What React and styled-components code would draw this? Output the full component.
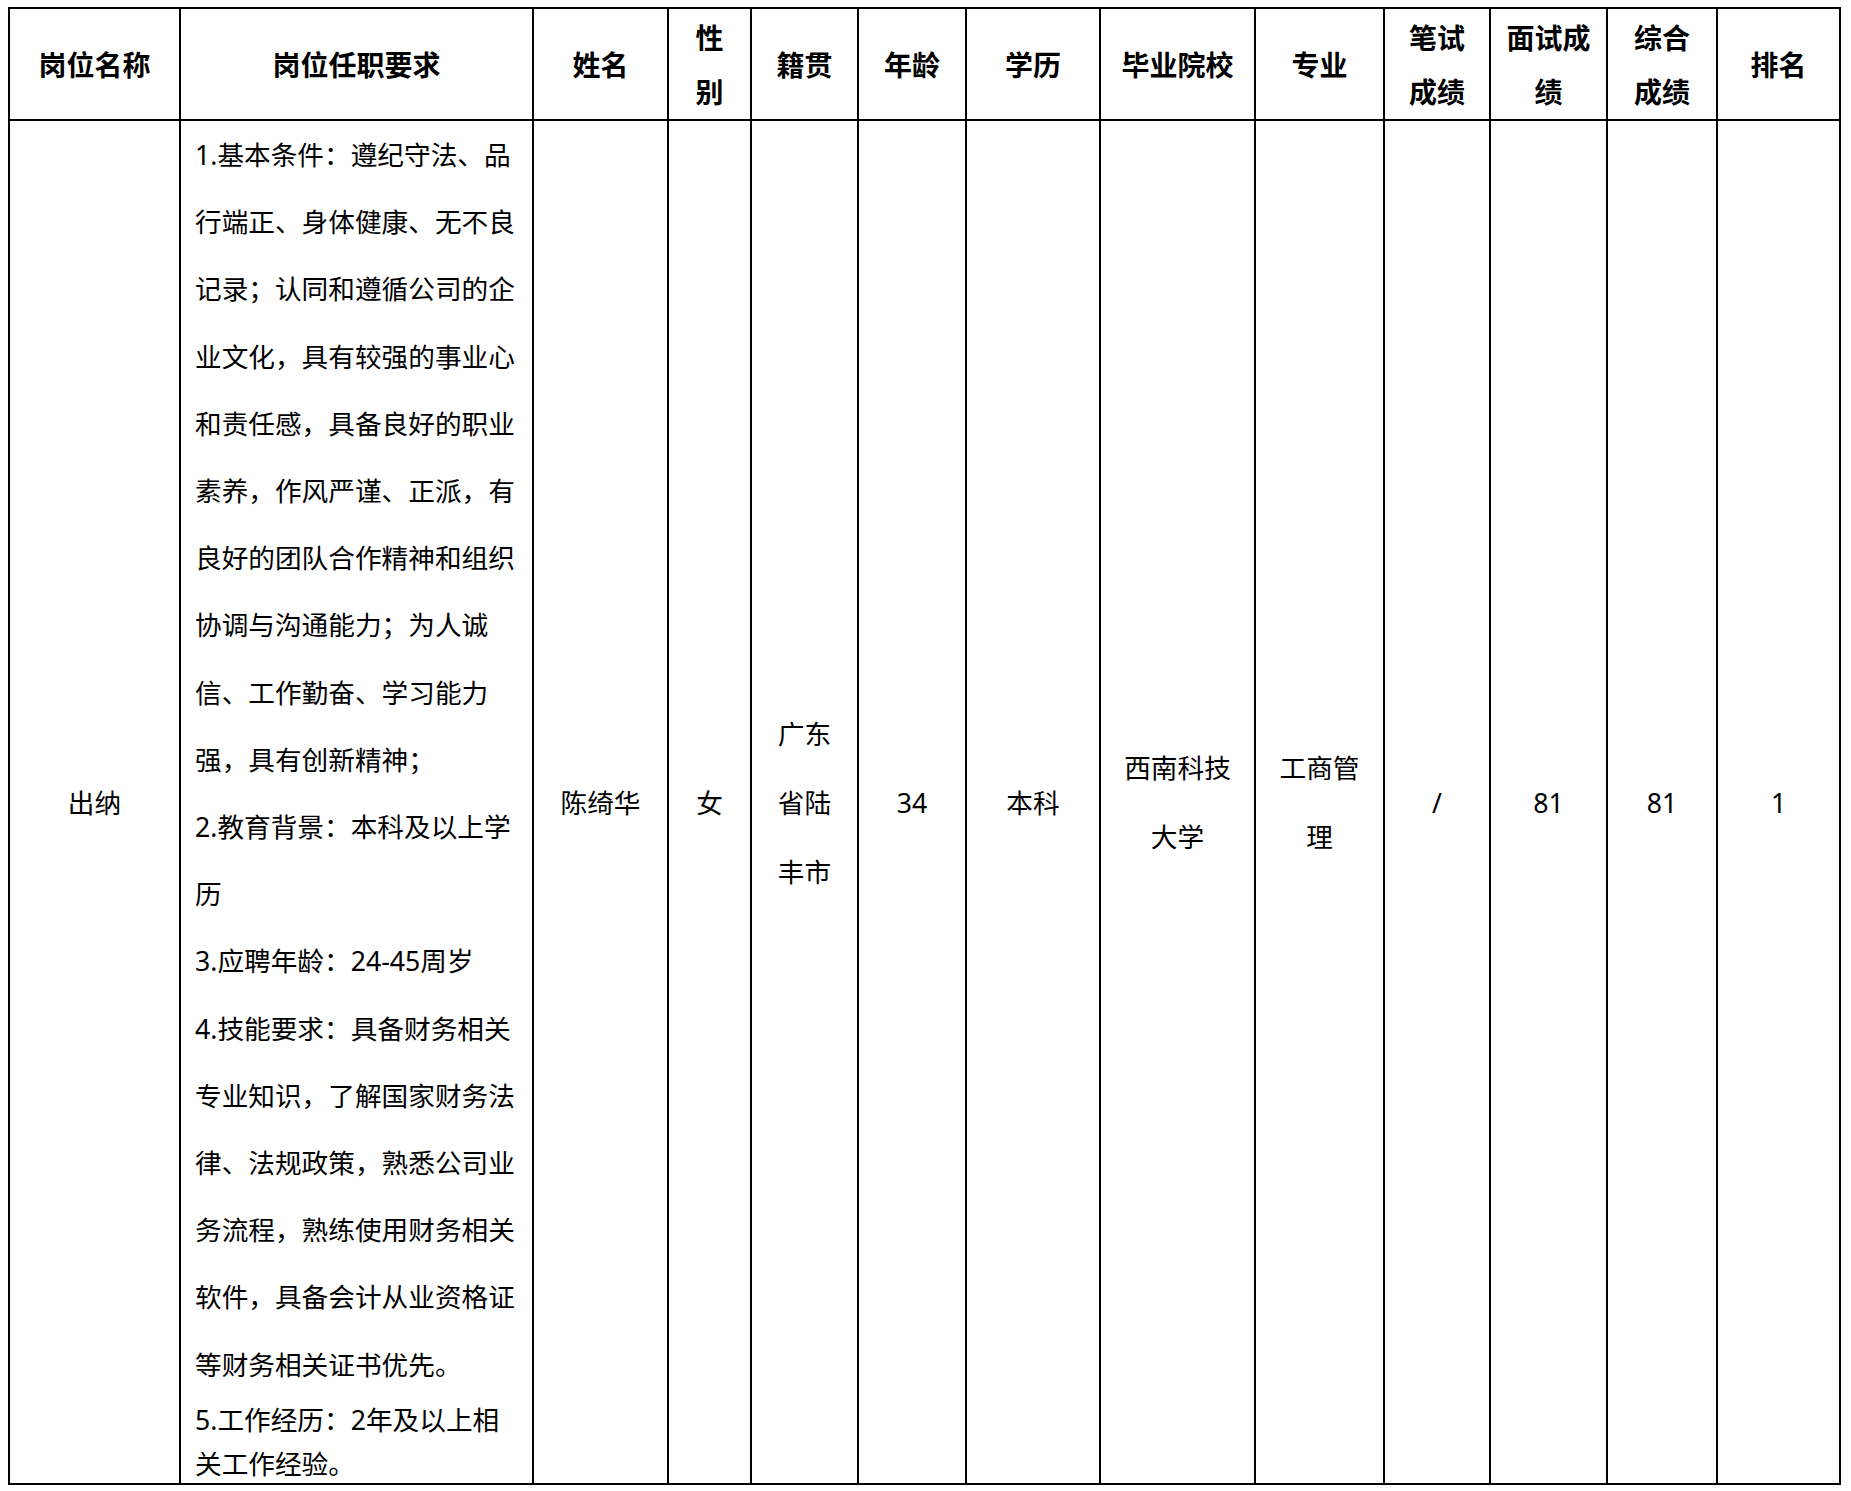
import React from "react";
import styled, { createGlobalStyle } from "styled-components";

const GlobalStyle = createGlobalStyle`
  html, body {
    margin: 0;
    padding: 0;
    background: #ffffff;
  }
  body {
    font-family: "Noto Sans", "Noto Sans CJK SC", sans-serif;
    color: #000000;
  }
`;

const Page = styled.div`
  padding: 7px 10px 6px 8px;
`;

const Table = styled.div`
  display: grid;
  width: max-content;
  grid-template-columns: 171px 353px 135px 83px 107px 108px 134px 155px 129px 106px 117px 110px 123px;
  grid-template-rows: 112px 1364px;
  border-top: 2px solid #000;
  border-left: 2px solid #000;
`;

const Cell = styled.div`
  box-sizing: border-box;
  border-right: 2px solid #000;
  border-bottom: 2px solid #000;
  display: flex;
  flex-direction: column;
  align-items: center;
  justify-content: center;
  text-align: center;
  overflow: hidden;
  min-width: 0;
`;

const HeadCell = styled(Cell)`
  font-family: "Noto Sans CJK SC", sans-serif;
  font-weight: 700;
  font-size: 28px;
  line-height: 54px;
`;

const BodyCell = styled(Cell)`
  font-weight: 400;
  font-size: 26.67px;
  line-height: ${(p) => p.$lh || 69}px;
`;

const RequirementCell = styled(BodyCell)`
  align-items: flex-start;
  justify-content: flex-start;
  text-align: left;
  padding: 0 15px 0 14px;
  line-height: 67.2px;
`;

const Line = styled.span`
  display: block;
  white-space: nowrap;
  line-height: ${(p) => (p.$tight ? "44px" : "inherit")};
`;

const headers = [
  ["岗位名称"],
  ["岗位任职要求"],
  ["姓名"],
  ["性", "别"],
  ["籍贯"],
  ["年龄"],
  ["学历"],
  ["毕业院校"],
  ["专业"],
  ["笔试", "成绩"],
  ["面试成", "绩"],
  ["综合", "成绩"],
  ["排名"],
];

const requirements = [
  "1.基本条件：遵纪守法、品",
  "行端正、身体健康、无不良",
  "记录；认同和遵循公司的企",
  "业文化，具有较强的事业心",
  "和责任感，具备良好的职业",
  "素养，作风严谨、正派，有",
  "良好的团队合作精神和组织",
  "协调与沟通能力；为人诚",
  "信、工作勤奋、学习能力",
  "强，具有创新精神；",
  "2.教育背景：本科及以上学",
  "历",
  "3.应聘年龄：24-45周岁",
  "4.技能要求：具备财务相关",
  "专业知识，了解国家财务法",
  "律、法规政策，熟悉公司业",
  "务流程，熟练使用财务相关",
  "软件，具备会计从业资格证",
  "等财务相关证书优先。",
];

const tightLines = ["5.工作经历：2年及以上相", "关工作经验。"];

const row = [
  ["陈绮华"],
  ["女"],
  ["广东", "省陆", "丰市"],
  ["34"],
  ["本科"],
  ["西南科技", "大学"],
  ["工商管", "理"],
  ["/"],
  ["81"],
  ["81"],
  ["1"],
];

export default function App() {
  return (
    <>
      <GlobalStyle />
      <Page>
        <Table>
          {headers.map((lines, i) => (
            <HeadCell key={`h${i}`}>
              {lines.map((t, j) => (
                <Line key={j}>{t}</Line>
              ))}
            </HeadCell>
          ))}
          <BodyCell>
            <Line>出纳</Line>
          </BodyCell>
          <RequirementCell>
            {requirements.map((t, i) => (
              <Line key={i}>{t}</Line>
            ))}
            {tightLines.map((t, i) => (
              <Line key={`t${i}`} $tight>
                {t}
              </Line>
            ))}
          </RequirementCell>
          {row.map((lines, i) => (
            <BodyCell key={`b${i}`}>
              {lines.map((t, j) => (
                <Line key={j}>{t}</Line>
              ))}
            </BodyCell>
          ))}
        </Table>
      </Page>
    </>
  );
}
